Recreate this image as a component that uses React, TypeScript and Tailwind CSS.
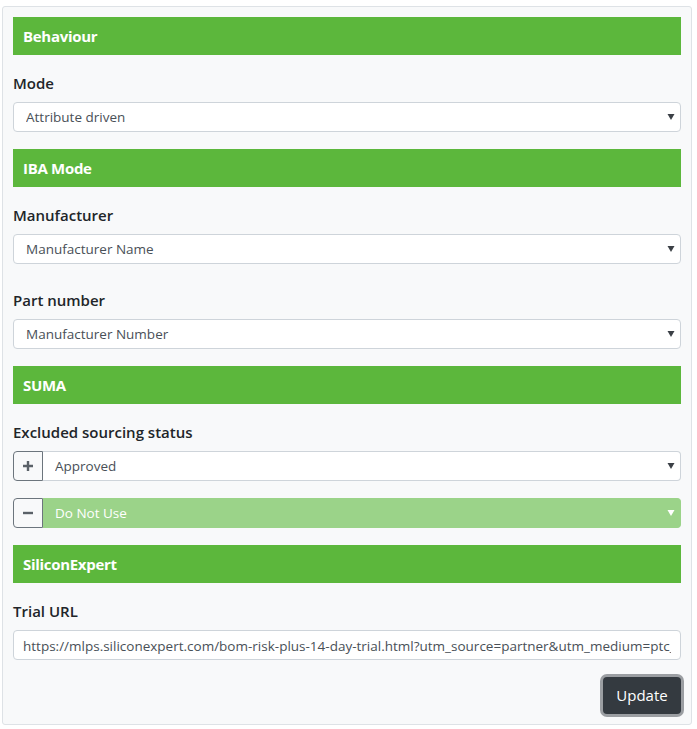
import { useState } from 'react';

const font = { fontFamily: '"Open Sans", "Noto Sans", sans-serif' };

function SectionHeader({ title }: { title: string }) {
  return (
    <div className="flex h-[38px] items-center bg-[#5cb73c] px-[10px]">
      <h3 className="text-[15px] font-bold tracking-[-0.3px] text-white">{title}</h3>
    </div>
  );
}

function Caret({ light }: { light?: boolean }) {
  return (
    <svg
      width="8"
      height="7"
      viewBox="0 0 8 7"
      className="pointer-events-none absolute right-[6px] top-1/2 -translate-y-1/2"
    >
      <path d="M0.5 0.5 H7.5 L4 6.5 Z" fill={light ? '#ffffff' : '#3b4046'} />
    </svg>
  );
}

function SelectBox({
  value,
  options,
  className = '',
  light,
}: {
  value: string;
  options: string[];
  className?: string;
  light?: boolean;
}) {
  const [current, setCurrent] = useState(value);
  return (
    <div className={`relative flex-1 ${className}`}>
      <select
        value={current}
        onChange={(e) => setCurrent(e.target.value)}
        className={`h-[30px] w-full appearance-none border pl-[12px] pr-6 pt-[1px] text-[13.5px] outline-none ${
          light
            ? 'border-[#9bd389] bg-[#9bd389] text-white'
            : 'border-[#ced4da] bg-white text-[#495057]'
        }`}
        style={font}
      >
        {options.map((o) => (
          <option key={o}>{o}</option>
        ))}
      </select>
      <Caret light={light} />
    </div>
  );
}

function FieldLabel({ children }: { children: string }) {
  return <label className="block h-6 text-[15px] font-semibold leading-6 text-[#212529]">{children}</label>;
}

function AddRemove({ kind }: { kind: 'add' | 'remove' }) {
  return (
    <button className="flex h-[30px] w-[30px] items-center justify-center rounded-l border border-[#6c757d] bg-[#f8f9fa]">
      <svg width="12" height="12" viewBox="0 0 12 12">
        <path d={kind === 'add' ? 'M6 1 V11 M1 6 H11' : 'M1 6 H11'} stroke="#5a6168" strokeWidth="2.4" />
      </svg>
    </button>
  );
}

export default function App() {
  return (
    <div className="min-h-screen bg-white pl-[2px] pt-[6px]" style={font}>
      <div className="w-[690px] rounded-[3px] border border-[#dee2e6] bg-[#f8f9fa] px-[10px] pt-[10px] pb-[10px]">
        <SectionHeader title="Behaviour" />
        <div className="mt-4">
          <FieldLabel>Mode</FieldLabel>
          <SelectBox value="Attribute driven" options={['Attribute driven', 'Manual']} className="mt-[7px] [&_select]:rounded" />
        </div>

        <div className="mt-[17px]">
          <SectionHeader title="IBA Mode" />
        </div>
        <div className="mt-4">
          <FieldLabel>Manufacturer</FieldLabel>
          <SelectBox value="Manufacturer Name" options={['Manufacturer Name']} className="mt-[7px] [&_select]:rounded" />
        </div>
        <div className="mt-6">
          <FieldLabel>Part number</FieldLabel>
          <SelectBox value="Manufacturer Number" options={['Manufacturer Number']} className="mt-[7px] [&_select]:rounded" />
        </div>

        <div className="mt-[17px]">
          <SectionHeader title="SUMA" />
        </div>
        <div className="mt-4">
          <FieldLabel>Excluded sourcing status</FieldLabel>
          <div className="mt-[7px] flex">
            <AddRemove kind="add" />
            <SelectBox value="Approved" options={['Approved', 'Do Not Use']} className="[&_select]:rounded-r [&_select]:border-l-0" />
          </div>
          <div className="mt-[17px] flex">
            <AddRemove kind="remove" />
            <SelectBox
              value="Do Not Use"
              options={['Approved', 'Do Not Use']}
              light
              className="[&_select]:rounded-r [&_select]:border-l-0"
            />
          </div>
        </div>

        <div className="mt-[17px]">
          <SectionHeader title="SiliconExpert" />
        </div>
        <div className="mt-4">
          <FieldLabel>Trial URL</FieldLabel>
          <input
            className="mt-[7px] h-[30px] w-full rounded border border-[#ced4da] bg-white px-[9px] pt-[1px] text-[13.5px] text-[#495057] outline-none"
            defaultValue="https://mlps.siliconexpert.com/bom-risk-plus-14-day-trial.html?utm_source=partner&utm_medium=ptc_windchill&utm_campaign=trial"
            style={font}
          />
        </div>

        <div className="mt-[17px] flex justify-end">
          <button className="h-[37px] w-[78px] rounded-[4px] bg-[#343a40] text-[15px] text-white ring-[3px] ring-[#9b9ea2]">
            Update
          </button>
        </div>
      </div>
    </div>
  );
}
